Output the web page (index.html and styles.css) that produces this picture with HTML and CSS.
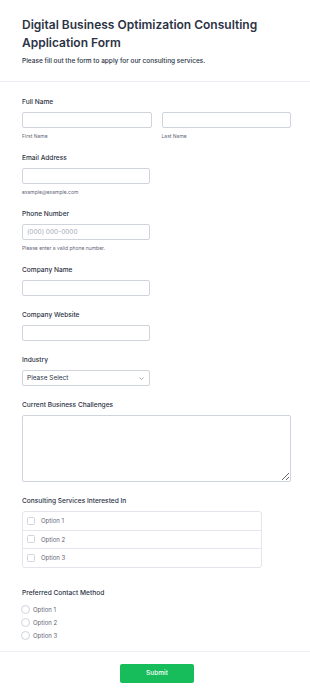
FILE: index.html
```html
<!DOCTYPE html>
<html lang="en">
<head>
    <meta charset="UTF-8">
    <meta name="viewport" content="width=device-width, initial-scale=1.0">
    <title>Digital Business Optimization Consulting Application Form</title>
    <link rel="stylesheet" href="styles.css">
</head>
<body>
    <header class="form-header">
        <h1 class="form-title">Digital Business Optimization Consulting Application Form</h1>
        <p class="form-subtitle">Please fill out the form to apply for our consulting services.</p>
    </header>
    <form class="form-body">
        <div class="field">
            <label class="label">Full Name</label>
            <div class="name-row">
                <div class="name-col">
                    <input type="text" class="input input-full">
                    <div class="sublabel">First Name</div>
                </div>
                <div class="name-col">
                    <input type="text" class="input input-full">
                    <div class="sublabel">Last Name</div>
                </div>
            </div>
        </div>

        <div class="field">
            <label class="label">Email Address</label>
            <input type="email" class="input">
            <div class="sublabel">example@example.com</div>
        </div>

        <div class="field">
            <label class="label">Phone Number</label>
            <input type="tel" class="input" placeholder="(000) 000-0000">
            <div class="sublabel">Please enter a valid phone number.</div>
        </div>

        <div class="field">
            <label class="label">Company Name</label>
            <input type="text" class="input">
        </div>

        <div class="field">
            <label class="label">Company Website</label>
            <input type="text" class="input">
        </div>

        <div class="field">
            <label class="label">Industry</label>
            <div class="select-wrap">
                <select class="input select">
                    <option>Please Select</option>
                </select>
                <svg class="select-arrow" width="5" height="3" viewBox="0 0 5 3">
                    <path d="M0.5 0.5 L2.5 2.5 L4.5 0.5" fill="none" stroke="#8a93a6" stroke-width="0.8"/>
                </svg>
            </div>
        </div>

        <div class="field">
            <label class="label">Current Business Challenges</label>
            <textarea class="input textarea"></textarea>
        </div>

        <div class="field field-checks">
            <label class="label">Consulting Services Interested In</label>
            <div class="check-list">
                <label class="check-row"><input type="checkbox" class="check"> Option 1</label>
                <label class="check-row"><input type="checkbox" class="check"> Option 2</label>
                <label class="check-row"><input type="checkbox" class="check"> Option 3</label>
            </div>
        </div>

        <div class="field field-last">
            <label class="label">Preferred Contact Method</label>
            <div class="radio-list">
                <label class="radio-row"><input type="radio" name="contact" class="radio"> Option 1</label>
                <label class="radio-row"><input type="radio" name="contact" class="radio"> Option 2</label>
                <label class="radio-row"><input type="radio" name="contact" class="radio"> Option 3</label>
            </div>
        </div>
    </form>
    <footer class="form-footer">
        <button type="button" class="submit">Submit</button>
    </footer>
</body>
</html>
```

FILE: styles.css
```css
html, body {
    margin: 0;
}
body {
    font-family: Inter, "Noto Sans", sans-serif;
    color: #2c3345;
    background-color: white;
}
.form-header {
    padding: 16px 22px;
    border-bottom: 1px solid #eceef3;
}
.form-title {
    margin: 0;
    font-size: 12px;
    line-height: 18px;
    font-weight: 600;
}
.form-subtitle {
    margin: 5px 0 0;
    font-size: 6.5px;
    line-height: 8px;
    font-weight: 500;
}
.form-body {
    padding: 16px 22px 0;
}
.field {
    margin-bottom: 15px;
}
.field-checks {
    margin-bottom: 21px;
}
.field-last {
    margin-bottom: 9px;
}
.label {
    display: block;
    font-size: 6.6px;
    line-height: 8px;
    font-weight: 500;
    margin-bottom: 6px;
}
.input {
    box-sizing: border-box;
    display: block;
    width: 128px;
    height: 16px;
    margin: 0;
    padding: 0 4px;
    border: 1px solid #cfd4dd;
    border-radius: 2px;
    background-color: white;
    font-family: inherit;
    font-size: 6.5px;
    color: #2c3345;
    outline: none;
}
.input::placeholder {
    color: #a3aab8;
}
.name-row {
    display: flex;
    gap: 10px;
    width: 269px;
}
.name-col {
    flex: 1;
}
.input-full {
    width: 100%;
}
.sublabel {
    margin-top: 5px;
    font-size: 5px;
    line-height: 6px;
    color: #5f6677;
}
.select-wrap {
    position: relative;
    width: 128px;
}
.select {
    appearance: none;
    -webkit-appearance: none;
}
.select-arrow {
    position: absolute;
    right: 6px;
    top: 7px;
}
.textarea {
    width: 269px;
    height: 67px;
    padding: 4px;
    resize: vertical;
}
.check-list {
    width: 238px;
    border: 1px solid #e3e6ec;
    border-radius: 3px;
}
.check-row {
    display: flex;
    align-items: center;
    gap: 6px;
    height: 17.5px;
    padding-left: 4px;
    font-size: 6px;
    color: #5f6677;
}
.check-row + .check-row {
    border-top: 1px solid #e3e6ec;
}
.check {
    appearance: none;
    -webkit-appearance: none;
    width: 8px;
    height: 8px;
    margin: 0;
    border: 1px solid #cfd4dd;
    border-radius: 1.5px;
}
.radio-list {
    margin-top: 3.5px;
}
.radio-row {
    display: flex;
    align-items: center;
    gap: 3px;
    height: 13px;
    margin-left: -1px;
    font-size: 6px;
    color: #5f6677;
}
.radio {
    appearance: none;
    -webkit-appearance: none;
    width: 9px;
    height: 9px;
    margin: 0;
    border: 1px solid #cfd4dd;
    border-radius: 50%;
}
.form-footer {
    display: flex;
    justify-content: center;
    padding: 12px 0 17px 4px;
    border-top: 1px solid #eceef3;
}
.submit {
    width: 74px;
    height: 19px;
    border: none;
    border-radius: 2px;
    background-color: #18bd5b;
    color: white;
    font-family: inherit;
    font-size: 6.5px;
    font-weight: 500;
    cursor: pointer;
}
```
